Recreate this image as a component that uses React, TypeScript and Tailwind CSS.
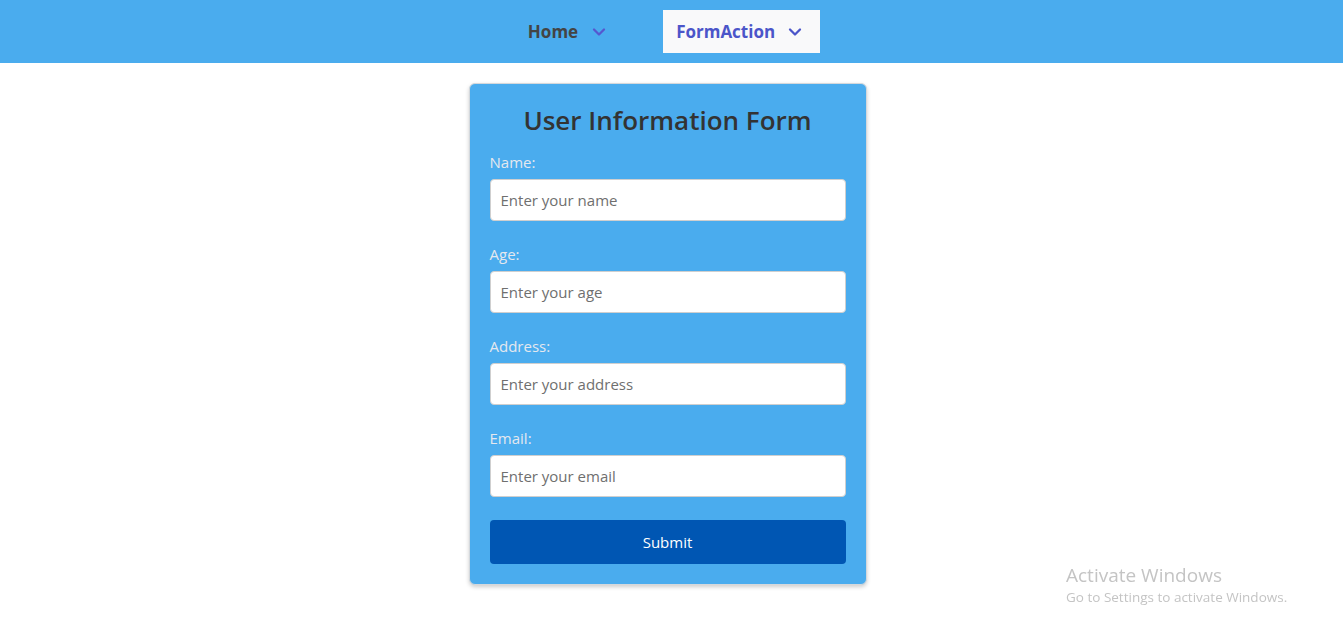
import { ChevronDown } from 'lucide-react';

const fields = [
  { id: 'name', label: 'Name:', placeholder: 'Enter your name', type: 'text' },
  { id: 'age', label: 'Age:', placeholder: 'Enter your age', type: 'number' },
  { id: 'address', label: 'Address:', placeholder: 'Enter your address', type: 'text' },
  { id: 'email', label: 'Email:', placeholder: 'Enter your email', type: 'email' },
];

export default function App() {
  return (
    <div
      className="min-h-screen bg-white"
      style={{ fontFamily: '"Open Sans", "Noto Sans", sans-serif' }}
    >
      {/* navbar */}
      <nav className="h-[63px] bg-[#4aacee] flex items-start justify-center pt-[10px] pr-[8px] gap-[41px]">
        <button className="h-[43px] px-[13px] flex items-center gap-[11px] text-[17px] font-bold text-[#444]">
          Home
          <ChevronDown className="w-[20px] h-[20px] text-[#5557cf]" strokeWidth={2.75} />
        </button>
        <button className="h-[43px] pl-[13px] pr-[15px] flex items-center gap-[10px] bg-[#f9f9fa] text-[17px] font-bold text-[#4b55c9]">
          FormAction
          <ChevronDown className="w-[20px] h-[20px] text-[#4b55c9]" strokeWidth={2.75} />
        </button>
      </nav>

      {/* form card */}
      <div className="flex justify-center pt-[20px] pr-[8px]">
        <form className="w-[398px] bg-[#4aacee] rounded-md border border-[#d4d8dc] shadow-[0_2px_4px_rgba(0,0,0,0.2)] px-[20px] pt-[19px] pb-[20px]">
          <h1 className="text-center text-[26px] leading-[34px] font-semibold text-[#333] mb-[15px]">
            User Information Form
          </h1>
          {fields.map((f) => (
            <div key={f.id} className="mb-[23px] last:mb-[20px]">
              <label
                htmlFor={f.id}
                className="block text-[15px] leading-[20px] text-[#e4e8ee] mb-[7px]"
              >
                {f.label}
              </label>
              <input
                id={f.id}
                type={f.type}
                placeholder={f.placeholder}
                className="w-full h-[42px] rounded-[4px] border border-[#cfcfcf] bg-white px-[10px] text-[15px] placeholder:text-[#6f6f6f] outline-none [appearance:textfield]"
              />
            </div>
          ))}
          <button
            type="button"
            className="w-full h-[44px] rounded-[4px] bg-[#0056b3] text-white text-[15px]"
          >
            Submit
          </button>
        </form>
      </div>

      {/* windows watermark */}
      <div className="fixed left-[1066px] top-[563px] text-[#c4c4c4] pointer-events-none">
        <div className="text-[19px] leading-[24px]">Activate Windows</div>
        <div className="text-[13.5px] leading-[20px]">Go to Settings to activate Windows.</div>
      </div>
    </div>
  );
}
